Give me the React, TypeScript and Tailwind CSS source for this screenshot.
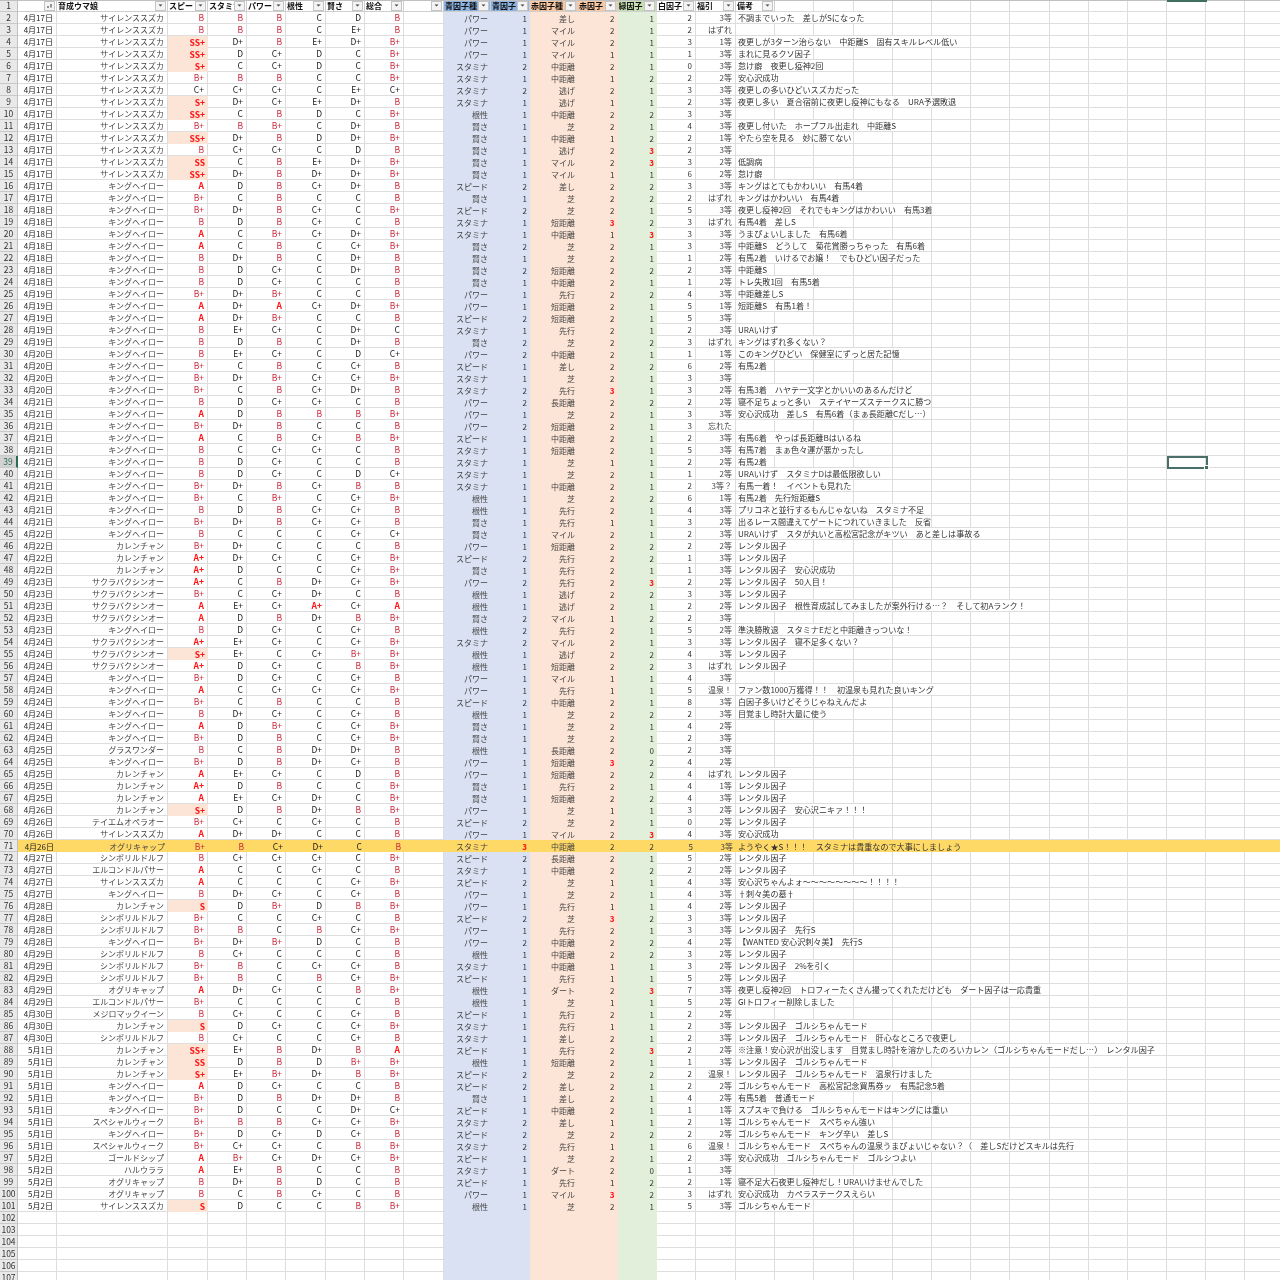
const NAMES: Record<string, string> = {
  si: "サイレンススズカ", ki: "キングヘイロー", ka: "カレンチャン", sa: "サクラバクシンオー",
  gr: "グラスワンダー", te: "テイエムオペラオー", og: "オグリキャップ", sy: "シンボリルドルフ",
  el: "エルコンドルパサー", me: "メジロマックイーン", sp: "スペシャルウィーク", go: "ゴールドシップ", ha: "ハルウララ",
};

const RAW = `4月17日|si|B|B|B|C|D|B|パワー|1|差し|2|1|2|3等|不調までいった　差しがSになった
4月17日|si|B|B|B|C|E+|B|パワー|1|マイル|2|1|2|はずれ|
4月17日|si|SS+|D+|B|E+|D+|B+|パワー|1|マイル|2|1|3|1等|夜更しが3ターン治らない　中距離S　固有スキルレベル低い
4月17日|si|SS+|D|C+|D|C|B+|パワー|1|マイル|1|1|1|3等|まれに見るクソ因子
4月17日|si|S+|C|C+|D|C|B+|スタミナ|2|中距離|2|1|0|3等|怠け癖　夜更し疫神2回
4月17日|si|B+|B|B|C|C|B+|スタミナ|1|中距離|1|2|2|2等|安心沢成功
4月17日|si|C+|C+|C+|C|E+|C+|スタミナ|2|逃げ|2|1|3|3等|夜更しの多いひどいスズカだった
4月17日|si|S+|D+|C+|E+|D+|B|スタミナ|1|逃げ|1|1|2|3等|夜更し多い　夏合宿前に夜更し疫神にもなる　URA予選敗退
4月17日|si|SS+|C|B|D|C|B+|根性|1|中距離|2|2|3|3等|
4月17日|si|B+|B|B+|C|D+|B|賢さ|1|芝|2|1|4|3等|夜更し付いた　ホープフル出走れ　中距離S
4月17日|si|SS+|D+|B|D|D+|B+|賢さ|1|中距離|1|2|2|1等|やたら空を見る　妙に勝てない
4月17日|si|B|C+|C+|C|D|B|賢さ|1|逃げ|2|3|2|3等|
4月17日|si|SS|C|B|E+|D+|B+|賢さ|1|マイル|2|3|3|2等|低調病
4月17日|si|SS+|D+|B|D+|D+|B+|賢さ|1|マイル|1|1|6|2等|怠け癖
4月17日|ki|A|D|B|C+|D+|B|スピード|2|差し|2|2|3|3等|キングはとてもかわいい　有馬4着
4月17日|ki|B+|C|B|C|C|B|賢さ|1|芝|2|2|2|はずれ|キングはかわいい　有馬4着
4月18日|ki|B+|D+|B|C+|C|B+|スピード|2|芝|2|1|5|3等|夜更し疫神2回　それでもキングはかわいい　有馬3着
4月18日|ki|B|D|B|C+|C|B|スタミナ|1|短距離|3|2|3|はずれ|有馬4着　差しS
4月18日|ki|A|C|B+|C+|D+|B+|スタミナ|1|中距離|1|3|3|3等|うまぴょいしました　有馬6着
4月18日|ki|A|C|B|C|C+|B+|賢さ|2|芝|2|1|3|3等|中距離S　どうして　菊花賞勝っちゃった　有馬6着
4月18日|ki|B|D+|B|C|D+|B|賢さ|1|芝|2|1|1|2等|有馬2着　いけるでお嬢！　でもひどい因子だった
4月18日|ki|B|D|C+|C|D+|B|賢さ|2|短距離|2|2|2|3等|中距離S
4月18日|ki|B|D|C+|C|C|B|賢さ|1|中距離|2|1|1|2等|トレ失敗1回　有馬5着
4月19日|ki|B+|D+|B+|C|C|B|パワー|1|先行|2|2|4|3等|中距離差しS
4月19日|ki|A|D+|A|C+|D+|B+|パワー|1|短距離|2|1|5|1等|短距離S　有馬1着！
4月19日|ki|A|D+|B+|C|C|B|スピード|2|短距離|2|1|5|3等|
4月19日|ki|B|E+|C+|C|D+|C|スタミナ|1|先行|2|1|2|3等|URAいけず
4月19日|ki|B|D|B|C|D+|B|賢さ|2|芝|2|2|3|はずれ|キングはずれ多くない？
4月20日|ki|B|E+|C+|C|D|C+|パワー|2|中距離|2|1|1|1等|このキングひどい　保健室にずっと居た記憶
4月20日|ki|B+|C|B|C|C+|B|スピード|1|差し|2|2|6|2等|有馬2着
4月20日|ki|B+|D+|B+|C+|C+|B+|スタミナ|1|芝|2|1|3|3等|
4月20日|ki|B+|C|B|C+|D+|B|スタミナ|2|先行|3|1|3|2等|有馬3着　ハヤテ一文字とかいいのあるんだけど
4月21日|ki|B|D|C+|C+|C|B|パワー|2|長距離|2|2|2|2等|寝不足ちょっと多い　ステイヤーズステークスに勝つ
4月21日|ki|A|D|B|B|B|B+|パワー|1|芝|2|1|3|3等|安心沢成功　差しS　有馬6着（まぁ長距離Cだし…）
4月21日|ki|B+|D+|B|C|C|B|パワー|2|短距離|2|1|3|忘れた|
4月21日|ki|A|C|B|C+|B|B+|スピード|1|中距離|2|1|2|3等|有馬6着　やっぱ長距離Bはいるね
4月21日|ki|B|C|C+|C+|C|B|スタミナ|1|短距離|2|1|5|3等|有馬7着　まぁ色々運が悪かったし
4月21日|ki|B|D|C+|C|C|B|スタミナ|1|芝|1|1|2|2等|有馬2着
4月21日|ki|B|D|C+|C|D|C+|スタミナ|1|芝|2|1|1|2等|URAいけず　スタミナDは最低限欲しい
4月21日|ki|B+|D+|B|C+|B|B|スタミナ|1|中距離|2|1|2|3等？|有馬一着！　イベントも見れた
4月21日|ki|B+|C|B+|C|C+|B+|根性|1|芝|2|2|6|1等|有馬2着　先行短距離S
4月21日|ki|B|D|B|C+|C+|B|根性|1|先行|2|1|4|3等|プリコネと並行するもんじゃないね　スタミナ不足
4月21日|ki|B+|D+|B|C+|C+|B|賢さ|1|先行|1|1|3|2等|出るレース間違えてゲートにつれていきました　反省
4月22日|ki|B|C|C|C|C+|C+|賢さ|1|マイル|2|1|2|3等|URAいけず　スタが丸いと高松宮記念がキツい　あと差しは事故る
4月22日|ka|B+|D+|C|C|C|B|パワー|1|短距離|2|2|2|2等|レンタル因子
4月22日|ka|A+|D+|C+|C|C+|B+|スピード|2|先行|2|2|1|3等|レンタル因子
4月22日|ka|A+|D|C|C|C+|B+|賢さ|1|先行|2|1|1|3等|レンタル因子　安心沢成功
4月23日|sa|A+|C|B|D+|C+|B+|パワー|2|先行|2|3|2|2等|レンタル因子　50人目！
4月23日|sa|B+|C|C+|D+|C|B|根性|1|逃げ|2|2|3|3等|レンタル因子
4月23日|sa|A|E+|C+|A+|C+|A|根性|1|逃げ|2|1|2|2等|レンタル因子　根性育成試してみましたが案外行ける…？　そして初Aランク！
4月23日|sa|A|D|B|D+|B|B+|賢さ|2|マイル|1|2|2|3等|
4月23日|ki|B|D|C+|C|C+|B|根性|2|先行|2|1|5|2等|準決勝敗退　スタミナEだと中距離きっついな！
4月24日|sa|A+|E+|C+|C|C+|B+|スタミナ|2|マイル|2|1|3|3等|レンタル因子　寝不足多くない？
4月24日|sa|S+|E+|C|C+|B+|B+|根性|1|逃げ|2|2|4|3等|レンタル因子
4月24日|sa|A+|D|C+|C|B|B+|根性|1|短距離|2|2|3|はずれ|レンタル因子
4月24日|ki|B+|D|C+|C|C+|B|パワー|1|マイル|1|1|4|3等|
4月24日|ki|A|C|C+|C+|C+|B+|パワー|1|先行|1|1|5|温泉！|ファン数1000万獲得！！　初温泉も見れた良いキング
4月24日|ki|B+|C|B|C|C|B|スピード|2|中距離|2|1|8|3等|白因子多いけどそうじゃねえんだよ
4月24日|ki|B|D+|C+|C|C+|B|根性|1|芝|2|2|2|3等|目覚まし時計大量に使う
4月24日|ki|A|D|B+|C|C+|B+|賢さ|1|芝|2|1|4|2等|
4月24日|ki|B+|D|B|C|C+|B+|賢さ|1|芝|2|1|2|3等|
4月25日|gr|B|C|B|D+|D+|B|根性|1|長距離|2|0|2|3等|
4月25日|ki|B+|D|B|D+|C+|B|パワー|1|短距離|3|2|4|2等|
4月25日|ka|A|E+|C+|C|D|B|パワー|1|短距離|2|2|4|はずれ|レンタル因子
4月25日|ka|A+|D|B|C|C|B+|賢さ|1|先行|2|1|4|1等|レンタル因子
4月25日|ka|A|E+|C+|D+|C|B+|賢さ|1|短距離|2|2|4|3等|レンタル因子
4月26日|ka|S+|D|B|D+|B|B+|パワー|1|芝|1|1|3|2等|レンタル因子　安心沢ニキァ！！！
4月26日|te|B+|C+|C|C+|C|B|スピード|2|芝|2|1|0|2等|レンタル因子
4月26日|si|A|D+|D+|C|C|B|パワー|1|マイル|2|3|4|3等|安心沢成功
4月26日|og|B+|B|C+|D+|C|B|スタミナ|3|中距離|2|2|5|3等|ようやく★S！！！　スタミナは貴重なので大事にしましょう
4月27日|sy|B|C+|C+|C+|C|B+|スピード|2|長距離|2|1|5|2等|レンタル因子
4月27日|el|A|C|C|C+|C|B|スタミナ|1|中距離|2|2|2|2等|レンタル因子
4月27日|si|A|C|C|C|C+|B+|スピード|2|芝|1|1|4|3等|安心沢ちゃんよォ～～～～～～～～！！！！
4月27日|ki|B|D+|C+|C|C+|B|パワー|1|芝|2|1|4|3等|†刺々美の墓†
4月28日|ka|S|D|B+|D|B|B+|パワー|1|先行|1|1|4|2等|レンタル因子
4月28日|sy|B+|C|C|C+|C|B|スピード|2|芝|3|2|3|3等|レンタル因子
4月28日|sy|B+|B|C|B|C+|B+|パワー|1|先行|2|1|3|3等|レンタル因子　先行S
4月28日|ki|B+|D+|B+|D|C|B|パワー|2|中距離|2|2|4|2等|【WANTED 安心沢刺々美】　先行S
4月29日|sy|B|C+|C|C|C|B|根性|1|中距離|2|2|3|2等|レンタル因子
4月29日|sy|B+|B|C|C+|C+|B|スタミナ|1|中距離|1|1|3|2等|レンタル因子　2%を引く
4月29日|sy|B+|B|C|B|C+|B+|スピード|1|先行|1|1|5|2等|レンタル因子
4月29日|og|A|D+|C+|C|B|B+|根性|1|ダート|2|3|7|3等|夜更し疫神2回　トロフィーたくさん撮ってくれただけども　ダート因子は一応貴重
4月29日|el|B+|C|C|C|C|B|根性|1|芝|1|1|5|2等|GIトロフィー削除しました
4月30日|me|B|C+|C|C|C+|B|スピード|1|先行|2|1|2|2等|
4月30日|ka|S|D|C+|C|C+|B+|スタミナ|1|先行|1|1|2|3等|レンタル因子　ゴルシちゃんモード
4月30日|sy|B|C+|C|C|C+|B|スタミナ|1|差し|2|1|2|3等|レンタル因子　ゴルシちゃんモード　肝心なところで夜更し
5月1日|ka|SS+|E+|B|D+|B|A|スピード|1|先行|2|3|2|2等|※注意！安心沢が出没します　目覚まし時計を溶かしたのろいカレン（ゴルシちゃんモードだし…）　レンタル因子
5月1日|ka|SS|D|B|D|B+|B+|根性|1|短距離|2|1|1|3等|レンタル因子　ゴルシちゃんモード
5月1日|ka|S+|E+|B+|D+|B|B+|スピード|2|芝|2|2|2|温泉！|レンタル因子　ゴルシちゃんモード　温泉行けました
5月1日|ki|A|D|C+|C|C|B|スピード|2|差し|2|1|2|2等|ゴルシちゃんモード　高松宮記念買馬券ッ　有馬記念5着
5月1日|ki|B+|D|B|D+|D+|B|賢さ|1|差し|2|1|4|2等|有馬5着　普通モード
5月1日|ki|B+|D|C|C|D+|C+|スピード|1|中距離|2|1|1|1等|スプスキで負ける　ゴルシちゃんモードはキングには重い
5月1日|sp|B+|B|B|C+|C+|B+|スタミナ|2|差し|1|1|2|1等|ゴルシちゃんモード　スペちゃん強い
5月1日|ki|B+|D|C+|D|C+|B|スピード|2|芝|2|2|2|2等|ゴルシちゃんモード　キング辛い　差しS
5月1日|sp|B+|C+|C+|C|B|B+|スタミナ|2|先行|1|1|6|温泉！|ゴルシちゃんモード　スペちゃんの温泉うまぴょいじゃない？（　差しSだけどスキルは先行
5月2日|go|A|B+|C+|D+|C+|B+|スピード|1|芝|2|1|2|3等|安心沢成功　ゴルシちゃんモード　ゴルシつよい
5月2日|ha|A|E+|B|C|C|B|スタミナ|1|ダート|2|0|1|3等|
5月2日|og|B|D+|B|D|C|B|スピード|1|先行|1|2|2|1等|寝不足大石夜更し疫神だし！URAいけませんでした
5月2日|og|B|C|B|C+|C|B|パワー|1|マイル|3|2|3|はずれ|安心沢成功　カペラステークスえらい
5月2日|si|S|D|C|C|B|B+|根性|1|芝|2|1|5|3等|ゴルシちゃんモード`;

const ROWS = RAW.split("\n").map((l) => l.split("|"));
const GRID =
  "grid grid-cols-[18px_39px_111px_40px_39px_39px_40px_39px_39px_40px_47px_39px_48px_39.5px_39.5px_39px_40px_repeat(14,39.2px)] h-[12px]";
const LINE = "border-r border-b border-[#dddddd]";
const EXTRA = Array.from({ length: 14 });

function gradeColor(g: string) {
  if (g[0] === "A" || g[0] === "S") return "text-[#ff1414] font-bold";
  if (g[0] === "B") return "text-[#c9283c]";
  return "text-[#222222]";
}

function FilterBtn({ sorted }: { sorted?: boolean }) {
  return (
    <div className="shrink-0 w-[11px] h-[10px] bg-[#f4f4f4] border border-[#c4c4c4] flex items-center justify-center">
      <svg width="7" height="5" viewBox="0 0 7 5">
        {sorted ? (
          <path d="M1 4h2M5 1v3.5" stroke="#333" strokeWidth="1" fill="none" />
        ) : (
          <path d="M1.5 1.5h4L3.5 3.5z" fill="#444" />
        )}
      </svg>
    </div>
  );
}

function Head({ label, cls, sorted }: { label?: string; cls?: string; sorted?: boolean }) {
  return (
    <div className={`flex items-center justify-between min-w-0 overflow-hidden pl-[1px] pr-[1px] border-r border-b border-[#cfcfcf] ${cls ?? "bg-white"}`}>
      <span className="font-bold text-[8px] leading-[11px] whitespace-nowrap overflow-hidden text-[#111111]">{label}</span>
      <FilterBtn sorted={sorted} />
    </div>
  );
}

function RowHead({ n }: { n: number }) {
  const sel = n === 39;
  return (
    <div className={`flex items-center justify-center text-[8.5px] leading-[11px] border-b border-[#c8c8c8] border-r ${sel ? "bg-[#d2d2d2] text-[#2d6b50] border-r-[#2d6b50] border-r-2" : "bg-[#e9e9e9] text-[#333333] border-r-[#c0c0c0]"}`}>
      {n}
    </div>
  );
}

function DataRow({ r, n }: { r: string[]; n: number }) {
  const [date, name, sp, st, po, gu, wi, to, bt, bn, rt, rn, gn, wn, fk, note] = r;
  const hi = n === 71;
  const plain = hi ? "bg-[#ffd966]" : `bg-white ${LINE}`;
  const base = "flex items-center justify-end min-w-0 pr-[3px] leading-[11px] whitespace-nowrap";
  const grade = (g: string, first?: boolean) => {
    const bg = hi ? "bg-[#ffd966]" : first && g[0] === "S" ? "bg-[#fce4d6]" : `bg-white ${LINE}`;
    return <div className={`${base} text-[8.5px] ${bg} ${gradeColor(g)}`}>{g}</div>;
  };
  const blue = hi ? "bg-[#ffd966]" : "bg-[#d9e1f2]";
  const orange = hi ? "bg-[#ffd966]" : "bg-[#fce4d6]";
  const green = hi ? "bg-[#ffd966]" : "bg-[#e2efda]";
  const num = (v: string) => (v === "3" ? "text-[#ff1414] font-bold" : "text-[#333333]");
  return (
    <div className={GRID}>
      <RowHead n={n} />
      <div className={`${base} text-[8px] text-[#222222] ${plain}`}>{date}</div>
      <div className={`${base} text-[8px] text-[#444444] ${plain}`}>{NAMES[name]}</div>
      {grade(sp, true)}
      {grade(st)}
      {grade(po)}
      {grade(gu)}
      {grade(wi)}
      {grade(to)}
      <div className={plain} />
      <div className={`${base} text-[8px] text-[#444444] ${blue}`}>{bt}</div>
      <div className={`${base} text-[8px] ${blue} ${num(bn)}`}>{bn}</div>
      <div className={`${base} text-[8px] text-[#444444] ${orange}`}>{rt}</div>
      <div className={`${base} text-[8px] ${orange} ${num(rn)}`}>{rn}</div>
      <div className={`${base} text-[8px] ${green} ${num(gn)}`}>{gn}</div>
      <div className={`${base} text-[8px] text-[#333333] ${plain}`}>{wn}</div>
      <div className={`${base} text-[8px] text-[#444444] ${plain}`}>{fk}</div>
      <div className={`flex items-center min-w-0 pl-[2px] relative z-10 ${plain}`}>
        {note && (
          <span className={`text-[8.1px] leading-[11px] whitespace-nowrap text-[#333333] ${hi ? "" : "bg-white"}`}>{note}</span>
        )}
      </div>
      {EXTRA.slice(1).map((_, i) => (
        <div key={i} className={plain} />
      ))}
    </div>
  );
}

function EmptyRow({ n }: { n: number }) {
  const plain = `bg-white ${LINE}`;
  return (
    <div className={GRID}>
      <RowHead n={n} />
      <div className={plain} />
      <div className={plain} />
      <div className={plain} />
      <div className={plain} />
      <div className={plain} />
      <div className={plain} />
      <div className={plain} />
      <div className={plain} />
      <div className={plain} />
      <div className="bg-[#d9e1f2]" />
      <div className="bg-[#d9e1f2]" />
      <div className="bg-[#fce4d6]" />
      <div className="bg-[#fce4d6]" />
      <div className="bg-[#e2efda]" />
      <div className={plain} />
      <div className={plain} />
      {EXTRA.map((_, i) => (
        <div key={i} className={plain} />
      ))}
    </div>
  );
}

export default function App() {
  return (
    <div className="relative w-[1280px] h-[1280px] overflow-hidden bg-white font-['Noto_Sans_CJK_JP',sans-serif] blur-[0.4px]">
      <div className={GRID}>
        <RowHead n={1} />
        <Head sorted />
        <Head label="育成ウマ娘" />
        <Head label="スピード" />
        <Head label="スタミナ" />
        <Head label="パワー" />
        <Head label="根性" />
        <Head label="賢さ" />
        <Head label="総合" />
        <Head />
        <Head label="青因子種" cls="bg-[#8db4e2]" />
        <Head label="青因子" cls="bg-[#8db4e2]" />
        <Head label="赤因子種" cls="bg-[#f8c8a4]" />
        <Head label="赤因子" cls="bg-[#f8c8a4]" />
        <Head label="緑因子" cls="bg-[#c6e0b4]" />
        <Head label="白因子" />
        <Head label="福引" />
        <Head label="備考" />
        {EXTRA.slice(1).map((_, i) => (
          <div key={i} className={`bg-white ${LINE}`} />
        ))}
      </div>
      {ROWS.map((r, i) => (
        <DataRow key={i} r={r} n={i + 2} />
      ))}
      {[102, 103, 104, 105, 106, 107].map((n) => (
        <EmptyRow key={n} n={n} />
      ))}
      <div className="absolute left-0 top-0 w-full h-[1px] bg-[#c0c0c0]" />
      <div className="absolute left-[1167px] top-0 w-[40px] h-[2px] bg-[#3f6f5f]" />
      <div className="absolute left-[1167px] top-[456px] w-[41px] h-[13px] border-2 border-[#4a6f68] z-20">
        <div className="absolute -right-[3px] -bottom-[3px] w-[5px] h-[5px] bg-[#3f6f5f] border border-white" />
      </div>
    </div>
  );
}
